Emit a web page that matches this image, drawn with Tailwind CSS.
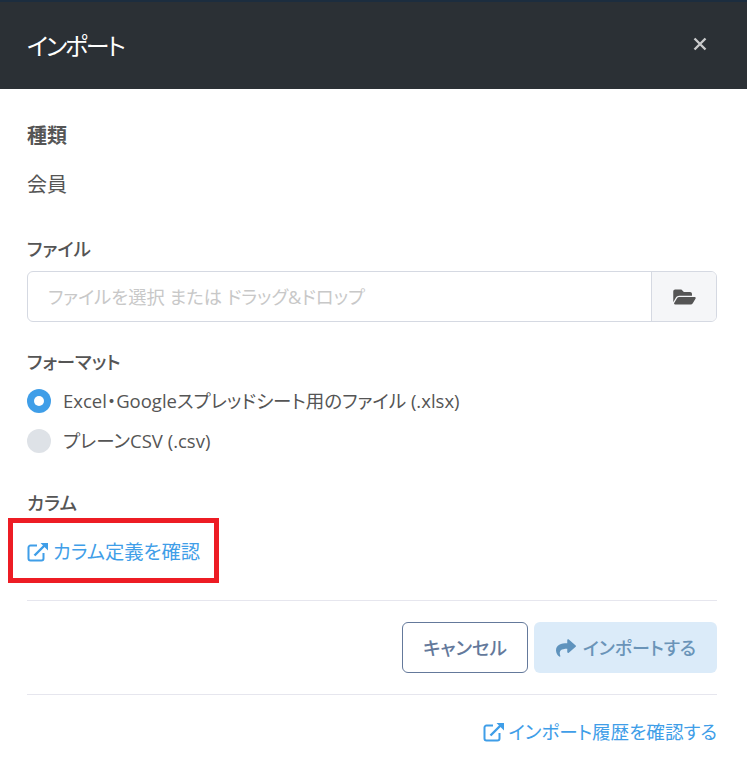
<!DOCTYPE html>
<html lang="ja"><head><meta charset="utf-8">
<script src="https://cdn.jsdelivr.net/npm/@tailwindcss/browser@4"></script>
</head>
<body class="bg-white">
<div class="w-[747px] h-[775px] overflow-hidden bg-white font-['Open_Sans','Noto_Sans_CJK_JP',sans-serif] [font-feature-settings:'palt'] text-[18.5px] leading-[26px] text-[#555]">
  <header class="h-[89px] bg-[#2b3035] border-t-2 border-[#1c2d3f] pl-[27px] pr-[39px] flex items-center justify-between">
    <h1 class="text-[24px] font-normal text-white tracking-[-2.2px]">インポート</h1>
    <svg class="w-[16px] h-[16px] mb-[4px]" viewBox="0 0 16 16"><path d="M2.5 2.5l11 11M13.5 2.500l-11 11" stroke="#c9cacb" stroke-width="2.4"/></svg>
  </header>
  <main class="pl-[27px] pr-[30px]">
    <div class="pt-[34px] font-bold text-[20px]">種類</div>
    <div class="mt-[23px] text-[20px]">会員</div>
    <div class="mt-[38px] font-medium">ファイル</div>
    <div class="mt-[9px] h-[51px] flex rounded-[6px] border border-[#d5d9e2] overflow-hidden">
      <div class="flex-1 pl-[20px] flex items-center text-[18.3px] text-[#c8c8c8]">ファイルを選択 または ドラッグ&amp;ドロップ</div>
      <div class="w-[65px] bg-[#f5f6f8] border-l border-[#d5d9e2] flex items-center justify-center">
        <svg class="w-[23px] h-[20px]" viewBox="0 0 576 512" fill="#555"><path d="M572.694 292.093L500.27 416.248A63.997 63.997 0 0 1 444.989 448H45.025c-18.523 0-30.064-20.093-20.731-36.093l72.424-124.155A64 64 0 0 1 152 256h399.964c18.523 0 30.064 20.093 20.73 36.093zM152 224h328v-48c0-26.51-21.49-48-48-48H272l-64-64H48C21.49 64 0 85.49 0 112v278.046l69.077-118.418C86.214 242.25 118.206 224 152 224z"/></svg>
      </div>
    </div>
    <div class="mt-[27px] font-medium">フォーマット</div>
    <div class="mt-[12px] flex items-center gap-[12px] h-[28px]">
      <span class="w-[24px] h-[24px] rounded-full bg-[#3f9ee8] flex items-center justify-center"><span class="w-[10px] h-[10px] rounded-full bg-white"></span></span>
      <span>Excel・Googleスプレッドシート用のファイル (.xlsx)</span>
    </div>
    <div class="mt-[12px] flex items-center gap-[12px] h-[28px]">
      <span class="w-[24px] h-[24px] rounded-full bg-[#dee2e7]"></span>
      <span>プレーンCSV (.csv)</span>
    </div>
    <div class="mt-[35px] font-medium">カラム</div>
    <div class="relative mt-[21px] h-[30px] flex items-center gap-[4px] text-[19.3px] text-[#3f9ee8]">
      <span class="absolute left-[-19px] top-[-19px] w-[211px] h-[65px] border-[5px] border-[#ed1c24]"></span>
      <svg class="w-[22px] h-[20px] shrink-0" viewBox="0 0 22 20" fill="none" stroke="#3f9ee8" stroke-width="2"><path d="M10 3.5H3.5a2 2 0 0 0-2 2V16.500a2 2 0 0 0 2 2h11a2 2 0 0 0 2-2V11"/><path d="M7.500 13.500 18 3" stroke-width="2.400"/><path d="M13.500 1h7.500v7.500z" fill="#3f9ee8" stroke="none"/></svg>
      <span>カラム定義を確認</span>
    </div>
    <div class="mt-[33px] border-t border-[#e6e6ee]"></div>
    <div class="mt-[21px] flex justify-end gap-[6px]">
      <button class="w-[126px] h-[51px] rounded-[6px] border border-[#64799b] bg-white font-medium text-[#64799b]">キャンセル</button>
      <button class="w-[183px] h-[51px] rounded-[6px] bg-[#dbebf9] font-medium text-[18px] text-[#6a94b8] flex items-center justify-center gap-[6px]">
        <svg class="w-[22px] h-[20px]" viewBox="0 0 512 512" fill="#5f93bd"><path d="M503.691 189.836L327.687 37.851C312.281 24.546 288 35.347 288 56.015v80.053C127.371 137.907 0 170.1 0 322.326c0 61.441 39.581 122.309 83.333 154.132 13.653 9.931 33.111-2.533 28.077-18.631C66.066 312.814 132.917 274.316 288 272.085V360c0 20.7 24.3 31.453 39.687 18.164l176.004-152c11.071-9.562 11.086-26.753 0-36.328z"/></svg>
        <span>インポートする</span>
      </button>
    </div>
    <div class="mt-[21px] border-t border-[#e6e6ee]"></div>
    <div class="mt-[24px] flex justify-end items-center gap-[4px] text-[18.6px] text-[#3f9ee8]">
      <svg class="w-[22px] h-[20px] shrink-0" viewBox="0 0 22 20" fill="none" stroke="#3f9ee8" stroke-width="2"><path d="M10 3.5H3.5a2 2 0 0 0-2 2V16.500a2 2 0 0 0 2 2h11a2 2 0 0 0 2-2V11"/><path d="M7.500 13.500 18 3" stroke-width="2.400"/><path d="M13.500 1h7.500v7.500z" fill="#3f9ee8" stroke="none"/></svg>
      <span>インポート履歴を確認する</span>
    </div>
  </main>
</div>
</body></html>
